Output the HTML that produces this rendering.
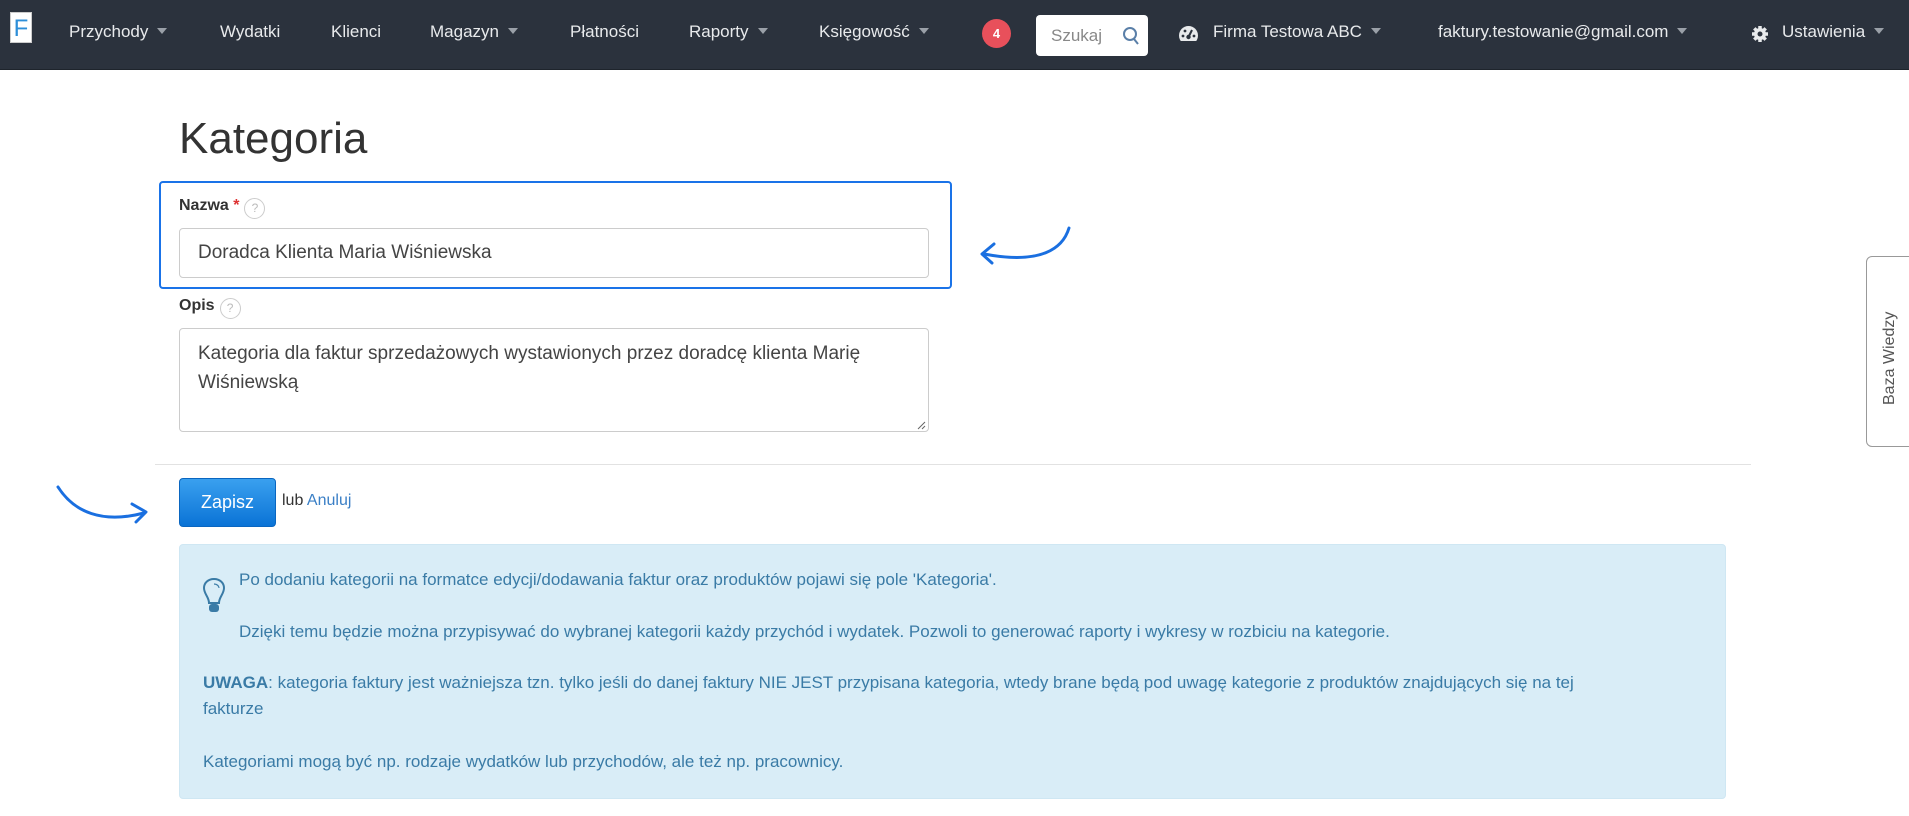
<!DOCTYPE html>
<html><head><meta charset="utf-8"><style>
*{box-sizing:border-box;margin:0;padding:0}
body{width:1909px;height:816px;overflow:hidden;background:#fff;font-family:"Liberation Sans",Arial,sans-serif;position:relative;color:#333}
.nav{position:absolute;left:0;top:0;width:1909px;height:70px;background:#2b323d;border-bottom:1px solid #1e242c}
.nav .it{position:absolute;top:22px;color:#e8eaec;font-size:17px;white-space:nowrap}
.car{display:inline-block;width:0;height:0;border-left:5px solid transparent;border-right:5px solid transparent;border-top:6px solid #9aa0a8;margin-left:9px;vertical-align:3px}
.logo{position:absolute;left:10px;top:12px;width:22px;height:31px;background:#fff;color:#2d8ed8;font-size:24px;line-height:31px;text-align:center;border:1px solid #ccc}
.badge{position:absolute;left:982px;top:19px;width:29px;height:29px;border-radius:50%;background:#e8505b;color:#fff;font-size:13px;font-weight:bold;text-align:center;line-height:29px}
.search{position:absolute;left:1036px;top:15px;width:112px;height:41px;background:#fff;border-radius:4px}
.search span{position:absolute;left:15px;top:11px;color:#888;font-size:17px}
h1{position:absolute;left:179px;top:114px;font-size:44px;font-weight:normal;color:#333}
.hl{position:absolute;left:159px;top:181px;width:793px;height:108px;border:2px solid #1a73e8;border-radius:4px}
.lab{position:absolute;font-weight:bold;font-size:16px;color:#333}
.q{display:inline-block;width:21px;height:21px;border:1px solid #ccc;border-radius:50%;color:#bbb;font-size:12px;font-weight:normal;text-align:center;line-height:19px;margin-left:5px;vertical-align:-2px}
.inp{position:absolute;left:179px;width:750px;border:1px solid #ccc;border-radius:4px;font-size:19px;color:#444;padding-left:18px}
.hr{position:absolute;left:155px;top:464px;width:1596px;height:1px;background:#e2e2e2}
.btn{position:absolute;left:179px;top:478px;width:97px;height:49px;border-radius:4px;background:linear-gradient(#3aa0ef,#0a73d6);border:1px solid #0a66c0;color:#fff;font-size:18px;text-align:center;line-height:47px}
.lub{position:absolute;left:282px;top:492px;font-size:16px}
.lub a{color:#3a7fc6}
.info{position:absolute;left:179px;top:544px;width:1547px;height:255px;background:#d9edf7;border:1px solid #cfe7f3;border-radius:4px;color:#3a7ba6;font-size:17px}
.info p{position:absolute;white-space:nowrap}
.baza{position:absolute;left:1866px;top:256px;width:50px;height:191px;border:1.5px solid #999;border-radius:6px;background:#fff}
.baza span{position:absolute;left:-32px;top:84px;transform:rotate(-90deg);width:110px;font-size:16px;color:#555;white-space:nowrap}
</style></head><body>
<div class="nav">
<div class="logo">F</div>
<div class="it" style="left:69px">Przychody<span class="car"></span></div>
<div class="it" style="left:220px">Wydatki</div>
<div class="it" style="left:331px">Klienci</div>
<div class="it" style="left:430px">Magazyn<span class="car"></span></div>
<div class="it" style="left:570px">Płatności</div>
<div class="it" style="left:689px">Raporty<span class="car"></span></div>
<div class="it" style="left:819px">Księgowość<span class="car"></span></div>
<div class="badge">4</div>
<div class="search"><span>Szukaj</span><svg style="position:absolute;left:86px;top:11px" width="18" height="20" viewBox="0 0 18 20"><circle cx="8" cy="8" r="6" fill="none" stroke="#5a7fa8" stroke-width="2"/><line x1="12" y1="13" x2="16" y2="18" stroke="#5a7fa8" stroke-width="2"/></svg></div>
<svg style="position:absolute;left:1178px;top:25px" width="21" height="19" viewBox="0 0 21 19"><circle cx="10.5" cy="10.5" r="9.5" fill="#e8eaec"/><rect x="0" y="16" width="21" height="3" fill="#2b323d"/><circle cx="10.5" cy="12" r="2.2" fill="#2b323d"/><line x1="10.5" y1="12" x2="14" y2="5" stroke="#2b323d" stroke-width="2"/><circle cx="5" cy="11" r="1.4" fill="#2b323d"/><circle cx="7" cy="6" r="1.4" fill="#2b323d"/><circle cx="16" cy="11" r="1.4" fill="#2b323d"/></svg>
<div class="it" style="left:1213px">Firma Testowa ABC<span class="car"></span></div>
<div class="it" style="left:1438px">faktury.testowanie@gmail.com<span class="car"></span></div>
<svg style="position:absolute;left:1751px;top:25px" width="18" height="18" viewBox="0 0 18 18"><g stroke="#e8eaec" stroke-width="3.5"><line x1="9" y1="1" x2="9" y2="17"/><line x1="1" y1="9" x2="17" y2="9"/><line x1="3.3" y1="3.3" x2="14.7" y2="14.7"/><line x1="14.7" y1="3.3" x2="3.3" y2="14.7"/></g><circle cx="9" cy="9" r="6" fill="#e8eaec"/><circle cx="9" cy="9" r="2.5" fill="#2b323d"/></svg>
<div class="it" style="left:1782px">Ustawienia<span class="car"></span></div>
</div>
<h1>Kategoria</h1>
<div class="hl"></div>
<div class="lab" style="left:179px;top:197px">Nazwa <span style="color:#d33">*</span><span class="q">?</span></div>
<div class="inp" style="top:228px;height:50px;line-height:48px">Doradca Klienta Maria Wiśniewska</div>
<div class="lab" style="left:179px;top:297px">Opis<span class="q">?</span></div>
<div class="inp" style="top:328px;height:104px;padding-top:10px;line-height:29px">Kategoria dla faktur sprzedażowych wystawionych przez doradcę klienta Marię<br>Wiśniewską</div>
<svg style="position:absolute;left:916px;top:420px" width="10" height="10"><path d="M9 2L2 9M9 6L6 9" stroke="#666" stroke-width="1"/></svg>
<svg style="position:absolute;left:970px;top:220px" width="110" height="50"><path d="M99 8C93 28 72 45 14 34" fill="none" stroke="#1a6fe0" stroke-width="3" stroke-linecap="round"/><path d="M24 24L12 34L22 43" fill="none" stroke="#1a6fe0" stroke-width="3" stroke-linecap="round" stroke-linejoin="round"/></svg>
<div class="hr"></div>
<svg style="position:absolute;left:52px;top:482px" width="105" height="45"><path d="M6 5C22 30 50 42 92 31" fill="none" stroke="#1a6fe0" stroke-width="3" stroke-linecap="round"/><path d="M80 22L94 30L84 40" fill="none" stroke="#1a6fe0" stroke-width="3" stroke-linecap="round" stroke-linejoin="round"/></svg>
<div class="btn">Zapisz</div>
<div class="lub">lub <a>Anuluj</a></div>
<div class="info">
<svg style="position:absolute;left:22px;top:32px" width="24" height="38" viewBox="0 0 24 38"><path d="M12 2C6 2 2 6 2 11C2 17 7 20 7 26L17 26C17 20 22 17 22 11C22 6 18 2 12 2Z" fill="none" stroke="#3a7ba6" stroke-width="2"/><rect x="7" y="27" width="10" height="8" rx="3" fill="#3a7ba6"/><path d="M12 7C15 7 17 9 17 11" fill="none" stroke="#3a7ba6" stroke-width="1.2"/></svg>
<p style="left:59px;top:25px">Po dodaniu kategorii na formatce edycji/dodawania faktur oraz produktów pojawi się pole 'Kategoria'.</p>
<p style="left:59px;top:77px">Dzięki temu będzie można przypisywać do wybranej kategorii każdy przychód i wydatek. Pozwoli to generować raporty i wykresy w rozbiciu na kategorie.</p>
<p style="left:23px;top:128px"><b>UWAGA</b>: kategoria faktury jest ważniejsza tzn. tylko jeśli do danej faktury NIE JEST przypisana kategoria, wtedy brane będą pod uwagę kategorie z produktów znajdujących się na tej</p>
<p style="left:23px;top:154px">fakturze</p>
<p style="left:23px;top:207px">Kategoriami mogą być np. rodzaje wydatków lub przychodów, ale też np. pracownicy.</p>
</div>
<div class="baza"><span>Baza Wiedzy</span></div>
</body></html>
